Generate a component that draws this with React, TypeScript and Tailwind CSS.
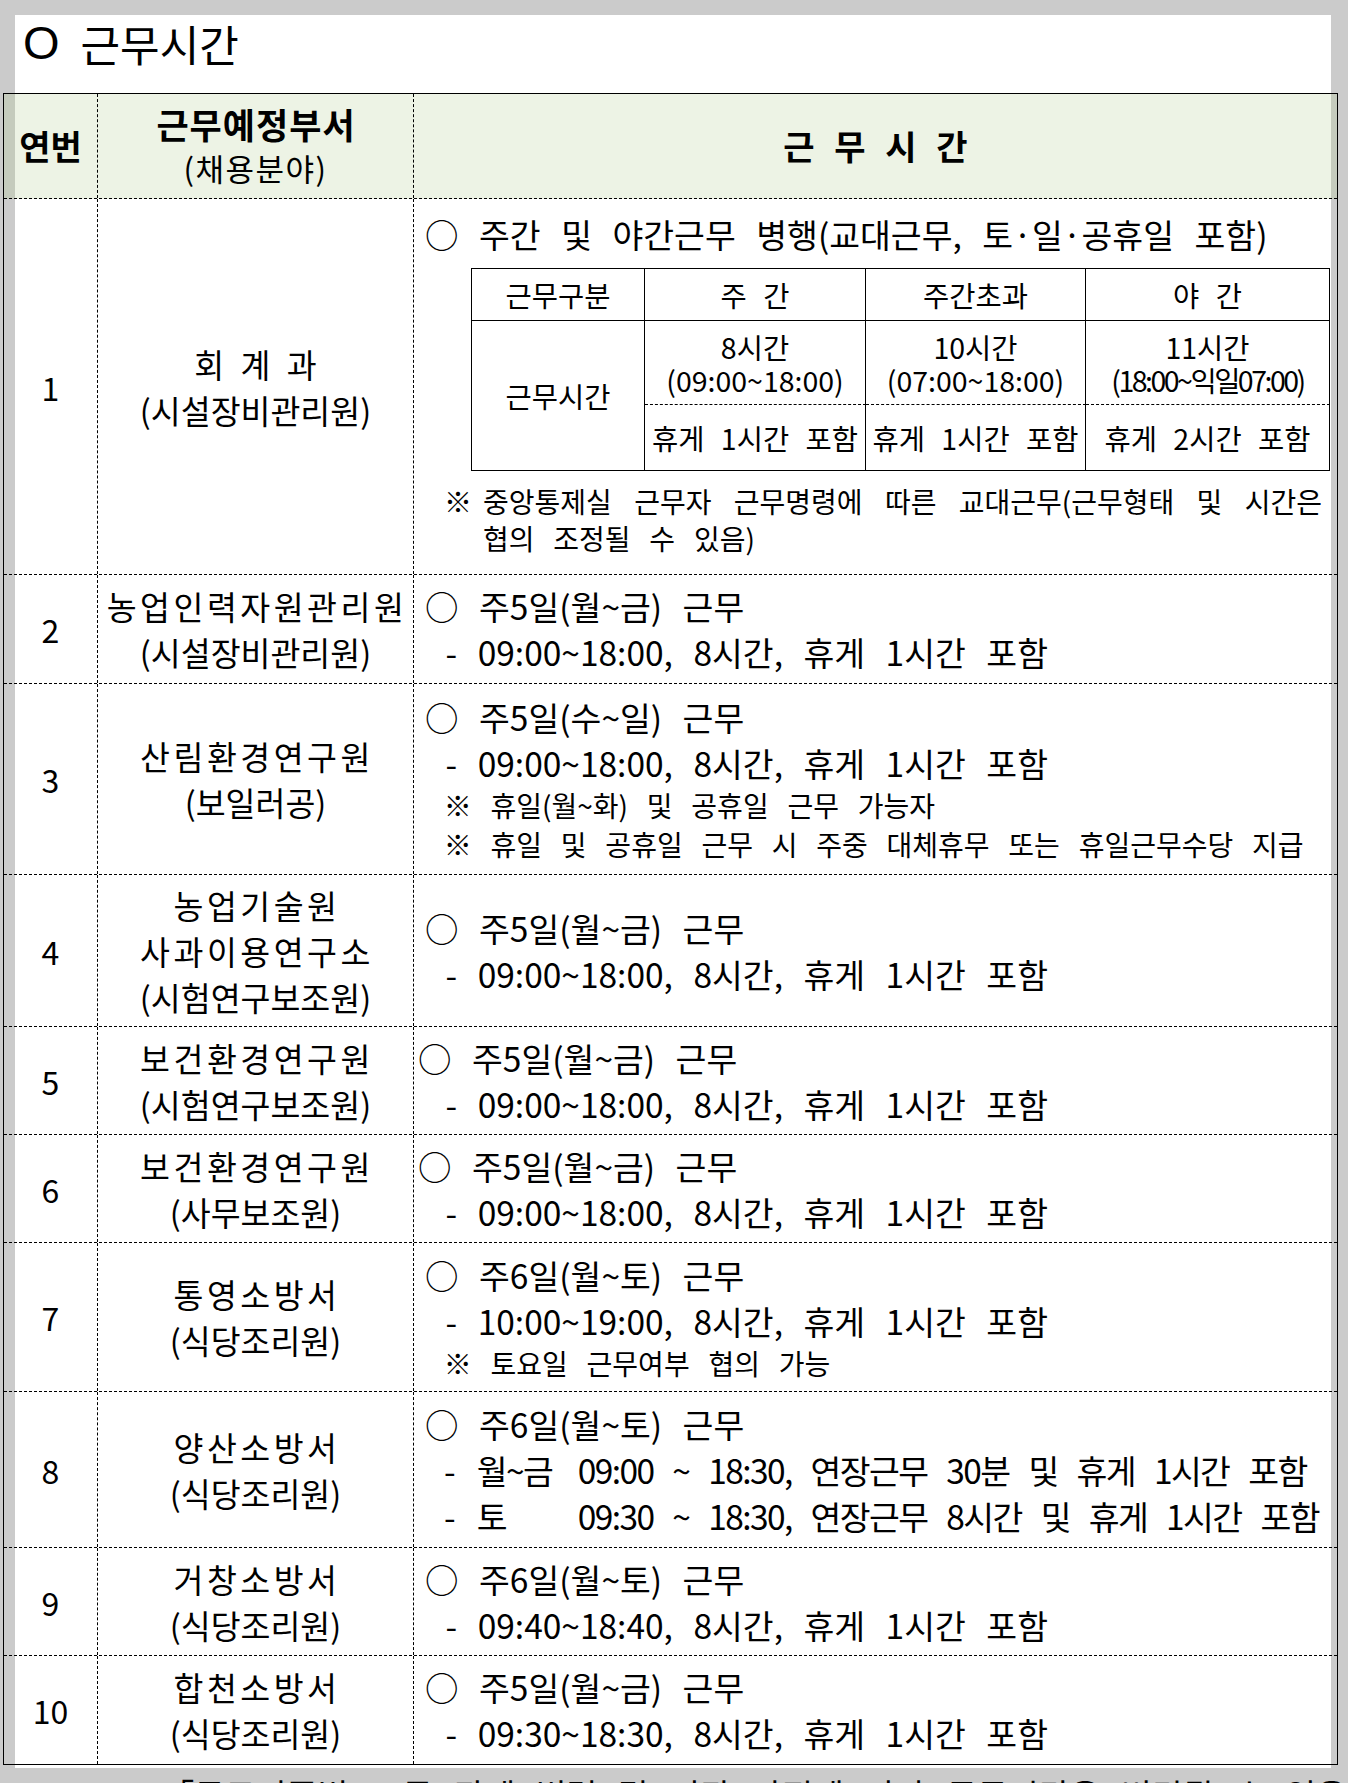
import React from "react";

type Line = { t: string; kind: "main" | "note" };

const MAIN = "text-[33.5px] leading-[46px] [word-spacing:13px] whitespace-pre";
const NOTE = "text-[28px] leading-[39px] [word-spacing:12.5px] whitespace-pre";

type Row = {
  no: string;
  h: string;
  dept: string[];
  shift?: boolean;
  lines?: Line[];
};

const m = (t: string): Line => ({ t, kind: "main" });
const n = (t: string): Line => ({ t, kind: "note" });

const rows: Row[] = [
  {
    no: "2",
    h: "h-[109px]",
    dept: ["농업인력자원관리원", "(시설장비관리원)"],
    lines: [m("○ 주5일(월~금) 근무"), m(" - 09:00~18:00, 8시간, 휴게 1시간 포함")],
  },
  {
    no: "3",
    h: "h-[191px]",
    dept: ["산림환경연구원", "(보일러공)"],
    lines: [
      m("○ 주5일(수~일) 근무"),
      m(" - 09:00~18:00, 8시간, 휴게 1시간 포함"),
      n(" ※ 휴일(월~화) 및 공휴일 근무 가능자"),
      n(" ※ 휴일 및 공휴일 근무 시 주중 대체휴무 또는 휴일근무수당 지급"),
    ],
  },
  {
    no: "4",
    h: "h-[152px]",
    dept: ["농업기술원", "사과이용연구소", "(시험연구보조원)"],
    lines: [m("○ 주5일(월~금) 근무"), m(" - 09:00~18:00, 8시간, 휴게 1시간 포함")],
  },
  {
    no: "5",
    h: "h-[108px]",
    dept: ["보건환경연구원", "(시험연구보조원)"],
    shift: true,
    lines: [m("○ 주5일(월~금) 근무"), m(" - 09:00~18:00, 8시간, 휴게 1시간 포함")],
  },
  {
    no: "6",
    h: "h-[108px]",
    dept: ["보건환경연구원", "(사무보조원)"],
    shift: true,
    lines: [m("○ 주5일(월~금) 근무"), m(" - 09:00~18:00, 8시간, 휴게 1시간 포함")],
  },
  {
    no: "7",
    h: "h-[149px]",
    dept: ["통영소방서", "(식당조리원)"],
    lines: [
      m("○ 주6일(월~토) 근무"),
      m(" - 10:00~19:00, 8시간, 휴게 1시간 포함"),
      n(" ※ 토요일 근무여부 협의 가능"),
    ],
  },
  {
    no: "8",
    h: "h-[156px]",
    dept: ["양산소방서", "(식당조리원)"],
  },
  {
    no: "9",
    h: "h-[108px]",
    dept: ["거창소방서", "(식당조리원)"],
    lines: [m("○ 주6일(월~토) 근무"), m(" - 09:40~18:40, 8시간, 휴게 1시간 포함")],
  },
  {
    no: "10",
    h: "h-[108px]",
    dept: ["합천소방서", "(식당조리원)"],
    lines: [m("○ 주5일(월~금) 근무"), m(" - 09:30~18:30, 8시간, 휴게 1시간 포함")],
  },
];

function DeptCell({ dept }: { dept: string[] }) {
  return (
    <div className="flex flex-col items-center justify-center border-r border-dashed border-black text-center">
      {dept.map((d, i) => {
        const paren = d.startsWith("(");
        return (
          <div
            key={i}
            className={
              paren
                ? "text-[32.5px] leading-[46px] whitespace-pre"
                : "pl-[3px] text-[32.5px] leading-[46px] tracking-[3.5px] whitespace-pre"
            }
          >
            {d}
          </div>
        );
      })}
    </div>
  );
}

function NoCell({ no }: { no: string }) {
  return (
    <div className="flex items-center justify-center border-r border-dashed border-black text-[32px] leading-[46px]">
      {no}
    </div>
  );
}

function SubTable() {
  const cell = "flex flex-col items-center justify-center border-r border-b border-black text-center";
  const mid =
    "flex flex-col items-center justify-center border-r border-b border-black text-center [border-bottom-style:dashed]";
  const txt = "text-[28.5px] leading-[33px] [word-spacing:10px] whitespace-pre";
  return (
    <div className="ml-[46px] mt-[11px] grid w-[859px] grid-cols-[173px_221px_220px_244px] grid-rows-[52px_84px_66px] border-l border-t border-black">
      <div className={cell}>
        <span className={txt}>근무구분</span>
      </div>
      <div className={cell}>
        <span className={txt}>주 간</span>
      </div>
      <div className={cell}>
        <span className={txt}>주간초과</span>
      </div>
      <div className={cell}>
        <span className={txt}>야 간</span>
      </div>
      <div className={cell + " row-span-2"}>
        <span className={txt}>근무시간</span>
      </div>
      <div className={mid}>
        <span className={txt}>8시간</span>
        <span className={txt}>(09:00~18:00)</span>
      </div>
      <div className={mid}>
        <span className={txt}>10시간</span>
        <span className={txt}>(07:00~18:00)</span>
      </div>
      <div className={mid}>
        <span className={txt}>11시간</span>
        <span className={txt + " tracking-[-2.5px]"}>(18:00~익일07:00)</span>
      </div>
      <div className={cell}>
        <span className={txt}>휴게 1시간 포함</span>
      </div>
      <div className={cell}>
        <span className={txt}>휴게 1시간 포함</span>
      </div>
      <div className={cell}>
        <span className={txt}>휴게 2시간 포함</span>
      </div>
    </div>
  );
}

export default function App() {
  return (
    <div className="h-[1783px] w-[1348px] overflow-hidden bg-[#cbcbcb] pt-[15px] font-['Noto_Sans_CJK_KR',sans-serif] text-black">
      <div className="ml-[15px] w-[1316px] bg-white pb-[3px]">
        {/* title */}
        <div className="flex h-[78px] items-start pl-[8px]">
          <span className="font-['Liberation_Sans',sans-serif] text-[47px] leading-[56px]">O</span>
          <span className="ml-[21px] text-[43px] leading-[56px]">근무시간</span>
        </div>

        {/* table */}
        <div className="-ml-[12px] w-[1335px] border border-black">
          {/* header */}
          <div className="grid h-[105px] grid-cols-[94px_316px_1fr] border-b border-dashed border-black bg-[rgba(177,203,142,0.23)]">
            <div className="flex items-center justify-center border-r border-dashed border-black text-[34px] font-bold leading-[46px]">
              연번
            </div>
            <div className="flex flex-col items-center justify-center border-r border-dashed border-black">
              <div className="pl-[1px] text-[35px] font-bold leading-[44px] tracking-[1px]">근무예정부서</div>
              <div className="text-[31px] leading-[44px] tracking-[1.5px]">(채용분야)</div>
            </div>
            <div className="flex items-center justify-center text-[34px] font-bold leading-[46px] [word-spacing:12px] whitespace-pre">
              근 무 시 간
            </div>
          </div>

          {/* row 1 */}
          <div className="grid h-[376px] grid-cols-[94px_316px_1fr] border-b border-dashed border-black">
            <NoCell no="1" />
            <div className="flex flex-col items-center justify-center border-r border-dashed border-black text-center">
              <div className="pl-[3px] text-[32.5px] leading-[46px] tracking-[3px] [word-spacing:3px] whitespace-pre">
                회 계 과
              </div>
              <div className="text-[32.5px] leading-[46px] whitespace-pre">(시설장비관리원)</div>
            </div>
            <div className="flex flex-col pl-[11px] pt-[12px]">
              <div className={MAIN}>○ 주간 및 야간근무 병행(교대근무, 토·일·공휴일 포함)</div>
              <SubTable />
              <div className="mt-[12px] flex">
                <span className="ml-[19px] inline-block w-[39px] text-[28px] leading-[37px]">※</span>
                <div className="flex w-[839px] flex-col">
                  <div className="text-[28px] leading-[37px] [text-align-last:justify] [word-spacing:12.5px]">
                    {"중앙통제실 근무자 근무명령에 따른 교대근무(근무형태 및 시간은"}
                  </div>
                  <div className="text-[28px] leading-[37px] [word-spacing:12.5px] whitespace-pre">
                    협의 조정될 수 있음)
                  </div>
                </div>
              </div>
            </div>
          </div>

          {rows.map((r, idx) => (
            <div
              key={r.no}
              className={
                "grid grid-cols-[94px_316px_1fr] " +
                r.h +
                (idx === rows.length - 1 ? "" : " border-b border-dashed border-black")
              }
            >
              <NoCell no={r.no} />
              <DeptCell dept={r.dept} />
              <div className="flex flex-col justify-center pl-[11px]">
                {r.lines ? (
                  r.lines.map((l, i) => (
                    <div
                      key={i}
                      className={(l.kind === "main" ? MAIN : NOTE) + (r.shift && i === 0 ? " -ml-[7px]" : "")}
                    >
                      {l.t}
                    </div>
                  ))
                ) : (
                  <>
                    <div className={MAIN}>○ 주6일(월~토) 근무</div>
                    <div className={MAIN + " tracking-[-1.6px]"}>
                      {" - "}
                      <span className="ml-[4px] inline-block w-[82px]">월~금</span>
                      {" 09:00 ~ 18:30, 연장근무 30분 및 휴게 1시간 포함"}
                    </div>
                    <div className={MAIN + " tracking-[-1.6px]"}>
                      {" - "}
                      <span className="ml-[4px] inline-block w-[82px]">토</span>
                      {" 09:30 ~ 18:30, 연장근무 8시간 및 휴게 1시간 포함"}
                    </div>
                  </>
                )}
              </div>
            </div>
          ))}
        </div>
      </div>

      {/* next line of the document, mostly cut off at the bottom edge */}
      <div className="pl-[108px] pt-[3px] text-[33.5px] leading-[46px] [word-spacing:13px] whitespace-pre">
        {" - 「근로기준법」 등 관계 법령 및 기관 사정에 따라 근무시간은 변경될 수 있음"}
      </div>
    </div>
  );
}
